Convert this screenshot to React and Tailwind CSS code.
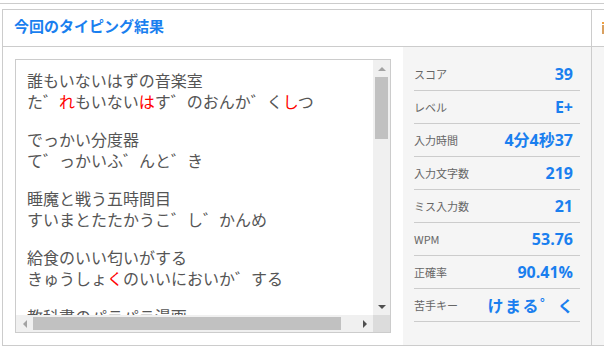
const JP = { fontFamily: '"Noto Sans CJK JP", "Noto Sans", sans-serif' };

const words = [
  { text: '誰もいないはずの音楽室', kana: [['た゛'], ['れ', true], ['もいない'], ['は', true], ['す゛のおんか゛く'], ['し', true], ['つ']] },
  { text: 'でっかい分度器', kana: [['て゛っかいふ゛んと゛き']] },
  { text: '睡魔と戦う五時間目', kana: [['すいまとたたかうこ゛し゛かんめ']] },
  { text: '給食のいい匂いがする', kana: [['きゅうしょ'], ['く', true], ['のいいにおいか゛する']] },
  { text: '教科書のパラパラ漫画', kana: [['きょうかしょのは゜らは゜らまんか゛']] },
];

const stats = [
  ['スコア', '39'],
  ['レベル', 'E+'],
  ['入力時間', '4分4秒37'],
  ['入力文字数', '219'],
  ['ミス入力数', '21'],
  ['WPM', '53.76'],
  ['正確率', '90.41%'],
];

function Arrow({ dir, dark }) {
  const color = dark ? 'border-[#505050]' : 'border-[#a3a3a3]';
  if (dir === 'up') return <div className={`w-0 h-0 border-x-[4px] border-x-transparent border-b-[4px] ${color}`} />;
  if (dir === 'down') return <div className={`w-0 h-0 border-x-[4px] border-x-transparent border-t-[4px] ${color}`} />;
  if (dir === 'left') return <div className={`w-0 h-0 border-y-[4px] border-y-transparent border-r-[4px] ${color}`} />;
  return <div className={`w-0 h-0 border-y-[4px] border-y-transparent border-l-[4px] ${color}`} />;
}

function WordList() {
  return (
    <div className="w-[376px] h-[274px] border border-[#cccccc] bg-white grid grid-cols-[357px_17px] grid-rows-[255px_17px]">
      <div className="overflow-hidden pt-[10px] pl-[11px] text-[16px] leading-[21px] text-[#555555] whitespace-nowrap">
        {words.map((w) => (
          <div key={w.text} className="mb-[17px]">
            <div>{w.text}</div>
            <div>
              {w.kana.map(([s, miss], i) => (
                <span key={i} className={miss ? 'text-[#ff0000]' : ''}>{s}</span>
              ))}
            </div>
          </div>
        ))}
      </div>
      <div className="bg-[#f0f0f0] flex flex-col">
        <div className="h-[17px] flex items-center justify-center"><Arrow dir="up" /></div>
        <div className="h-[62px] mx-[2px] bg-[#c1c1c1]" />
        <div className="flex-1" />
        <div className="h-[17px] flex items-center justify-center"><Arrow dir="down" dark /></div>
      </div>
      <div className="bg-[#f0f0f0] flex">
        <div className="w-[17px] flex items-center justify-center"><Arrow dir="left" /></div>
        <div className="w-[308px] my-[2px] bg-[#c1c1c1]" />
        <div className="flex-1" />
        <div className="w-[17px] flex items-center justify-center"><Arrow dir="right" dark /></div>
      </div>
      <div className="bg-[#dcdcdc]" />
    </div>
  );
}

function Stats() {
  return (
    <div className="flex-1 bg-[#f5f5f5] pt-[11px] px-[11px]">
      {stats.map(([label, value]) => (
        <div key={label} className="h-[33px] border-b border-[#cccccc] flex items-center justify-between pr-[7px]">
          <span className="text-[11px] text-[#666666]">{label}</span>
          <span className="text-[16px] font-bold text-[#1a7fef]" style={{ fontFamily: '"Open Sans", "Noto Sans CJK JP", sans-serif' }}>{value}</span>
        </div>
      ))}
      <div className="h-[33px] border-b border-[#cccccc] flex items-center justify-between pr-[5px]">
        <span className="text-[11px] text-[#666666]">苦手キー</span>
        <span className="text-[16px] font-bold text-[#1a7fef] tracking-[1.5px]">けまる゜く</span>
      </div>
    </div>
  );
}

export default function App() {
  return (
    <div className="w-[604px] h-[353px] bg-white overflow-hidden" style={JP}>
      <div className="h-[4px] border-b border-[#cccccc]" />
      <div className="mt-[5px] flex">
        <div className="ml-[2px] w-[590px] shrink-0 border border-[#cccccc] flex flex-col">
          <div className="h-[37px] border-b border-[#cccccc] flex items-center pl-[11px] pb-[3px]">
            <h2 className="text-[15px] font-bold text-[#1a7fef]">今回のタイピング結果</h2>
          </div>
          <div className="flex h-[298px]">
            <div className="w-[400px] p-3">
              <WordList />
            </div>
            <Stats />
          </div>
        </div>
        <div className="flex-1 border-y border-[#cccccc] flex flex-col overflow-hidden">
          <div className="h-[37px] border-b border-[#cccccc] pl-[10px] pt-[12px]">
            <div className="w-[2px] h-[2px] bg-[#f0a040]" />
            <div className="mt-[1px] w-[2px] h-[9px] bg-[#d9a060]" />
          </div>
          <div className="flex-1 bg-[#f5f5f5]" />
        </div>
      </div>
    </div>
  );
}
